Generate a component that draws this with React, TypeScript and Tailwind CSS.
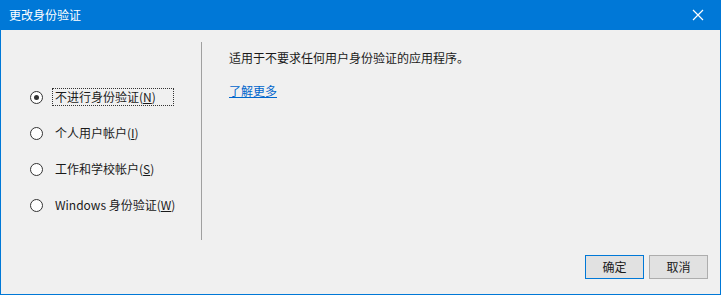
export default function App() {
  const options = [
    { label: "不进行身份验证", key: "N", checked: true },
    { label: "个人用户帐户", key: "I", checked: false },
    { label: "工作和学校帐户", key: "S", checked: false },
    { label: "Windows 身份验证", key: "W", checked: false },
  ];

  return (
    <div
      className="w-[721px] h-[295px] flex flex-col bg-[#0078d7] text-[12px] text-[#1a1a1a]"
      style={{ fontFamily: '"Segoe UI", "Noto Sans CJK SC", "Noto Sans", sans-serif' }}
    >
      {/* Title bar */}
      <div className="h-[30px] flex items-center justify-between pl-[9px] text-white">
        <span className="text-[12px] leading-none">更改身份验证</span>
        <svg className="w-[46px] h-[30px]" viewBox="0 0 46 30">
          <path d="M18 10 L28 20 M28 10 L18 20" stroke="white" strokeWidth="1.2" />
        </svg>
      </div>

      {/* Body */}
      <div className="flex-1 mx-px mb-px bg-[#f0f0f0] flex flex-col">
        <div className="flex h-[210px] pt-[12px]">
          {/* Left column */}
          <div className="w-[200px] flex flex-col pl-[29px] pt-[44px] gap-[14px]">
            {options.map((o) => (
              <div key={o.key} className="flex items-center h-[22px]">
                <span className="w-[13px] h-[13px] rounded-full border border-[#333] bg-white flex items-center justify-center">
                  {o.checked && <span className="w-[5px] h-[5px] rounded-full bg-[#333]" />}
                </span>
                <span
                  className={
                    "ml-[10px] pl-[2px] leading-[16px] " +
                    (o.checked ? "pr-[17px] outline outline-1 outline-dotted outline-[#333]" : "pr-[2px]")
                  }
                >
                  {o.label}(<span className="underline">{o.key}</span>)
                </span>
              </div>
            ))}
          </div>
          {/* Divider */}
          <div className="w-px bg-[#a0a0a0]" />
          {/* Right column */}
          <div className="flex-1 pl-[27px] pt-[8px]">
            <p className="leading-[16px]">适用于不要求任何用户身份验证的应用程序。</p>
            <a href="#" className="block mt-[17px] leading-[16px] text-[#0066cc] underline">
              了解更多
            </a>
          </div>
        </div>

        {/* Buttons */}
        <div className="flex-1 flex justify-end items-start pr-[12px] gap-[5px] pt-[15px]">
          <button className="w-[59px] h-[24px] border border-[#0078d7] bg-[#e1e1e1] leading-none">
            确定
          </button>
          <button className="w-[59px] h-[24px] border border-[#adadad] bg-[#e1e1e1] leading-none">
            取消
          </button>
        </div>
      </div>
    </div>
  );
}
